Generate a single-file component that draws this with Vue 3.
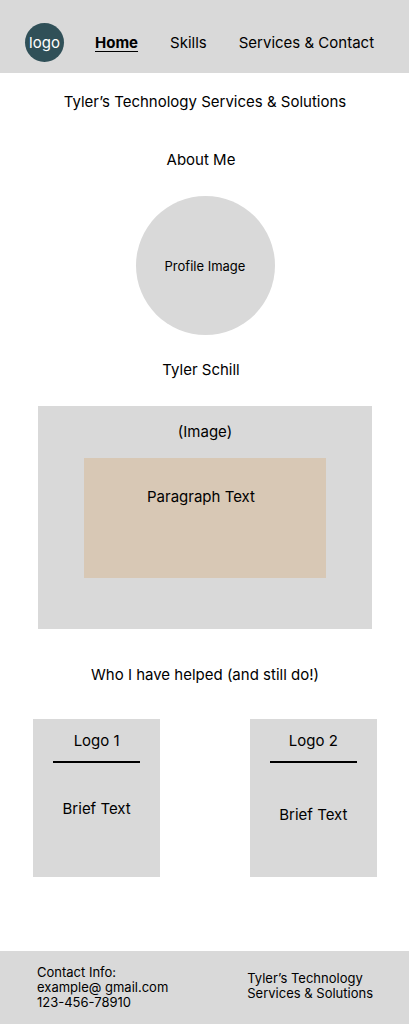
<script setup>
const links = [
  { label: 'Home', href: '#home', current: true },
  { label: 'Skills', href: '#skills', current: false },
  { label: 'Services & Contact', href: '#services', current: false },
]

const clients = [
  { name: 'Logo 1', text: 'Brief Text', roomy: false },
  { name: 'Logo 2', text: 'Brief Text', roomy: true },
]
</script>

<template>
  <div class="page">
    <header class="top">
      <a class="logo" href="#home">logo</a>
      <nav class="nav" aria-label="Main">
        <a
          v-for="link in links"
          :key="link.label"
          :href="link.href"
          :class="{ current: link.current }"
          :aria-current="link.current ? 'page' : undefined"
        >{{ link.label }}</a>
      </nav>
    </header>

    <main class="main">
      <h1 class="title">Tyler’s Technology Services &amp; Solutions</h1>

      <section class="about">
        <h2>About Me</h2>
        <div class="portrait">Profile Image</div>
        <h3>Tyler Schill</h3>
      </section>

      <section class="banner">
        <p>(Image)</p>
        <div class="paragraph">Paragraph Text</div>
      </section>

      <section class="helped">
        <h2>Who I have helped (and still do!)</h2>
        <div class="cards">
          <article v-for="client in clients" :key="client.name" class="card" :class="{ roomy: client.roomy }">
            <h3>{{ client.name }}</h3>
            <hr />
            <p>{{ client.text }}</p>
          </article>
        </div>
      </section>
    </main>

    <footer class="bottom">
      <address>Contact Info:<br />example@ gmail.com<br />123-456-78910</address>
      <p>Tyler’s Technology<br />Services &amp; Solutions</p>
    </footer>
  </div>
</template>

<style>
body {
  margin: 0;
  background: #fff;
}
</style>

<style scoped>
.page {
  display: flex;
  flex-direction: column;
  min-height: 100vh;
  font-family: Inter, "Liberation Sans", sans-serif;
  font-size: 15px;
  line-height: 18px;
  color: #000;
}

h1,
h2,
h3,
p {
  margin: 0;
  font-size: inherit;
  font-weight: 400;
}

a {
  color: inherit;
  text-decoration: none;
}

.top {
  display: flex;
  align-items: center;
  gap: 31px;
  padding: 23px 32px 11px 25px;
  background: #d9d9d9;
}

.logo {
  display: flex;
  align-items: center;
  justify-content: center;
  flex: none;
  width: 39px;
  height: 39px;
  border-radius: 50%;
  background: #305058;
  color: #fff;
}

.nav {
  display: flex;
  flex: 1;
  gap: 32px;
  white-space: nowrap;
}

.nav .current {
  font-weight: 700;
  text-decoration: underline;
  text-underline-offset: 3px;
}

.main {
  display: flex;
  flex: 1;
  flex-direction: column;
  padding: 20px 32px 74px 33px;
  text-align: center;
}

.about {
  margin-top: 40px;
}

.about h2,
.about h3,
.paragraph {
  padding-right: 8px;
}

.portrait {
  display: flex;
  align-items: center;
  justify-content: center;
  width: 139px;
  height: 139px;
  margin: 27px auto 26px;
  border-radius: 50%;
  background: #d9d9d9;
  font-size: 13px;
}

.banner {
  margin: 27px 5px 0;
  padding: 17px 46px 51px;
  background: #d9d9d9;
}

.paragraph {
  min-height: 90px;
  margin-top: 17px;
  padding-top: 30px;
  background: #d8c8b5;
}

.helped {
  margin-top: 37px;
}

.cards {
  display: grid;
  grid-template-columns: 37% 37%;
  justify-content: space-between;
  margin-top: 35px;
}

.card {
  min-height: 145px;
  padding-top: 13px;
  background: #d9d9d9;
}

.card hr {
  width: 68%;
  height: 2px;
  margin: 11px auto 37px;
  border: 0;
  background: #000;
}

.card.roomy hr {
  margin-bottom: 43px;
}

.bottom {
  display: flex;
  align-items: center;
  justify-content: space-between;
  padding: 14px 36px 14px 37px;
  background: #d9d9d9;
  font-size: 13px;
  line-height: 15px;
}

.bottom p {
  padding-bottom: 4px;
}

address {
  font-style: normal;
}
</style>
